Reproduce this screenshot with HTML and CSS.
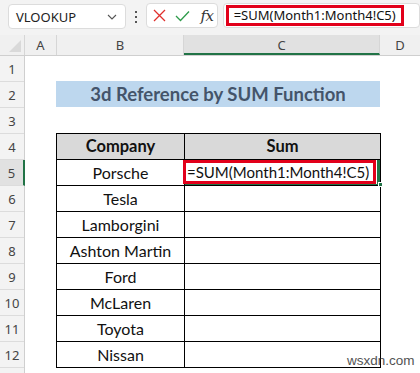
FILE: index.html
```html
<!DOCTYPE html>
<html lang="en">

<head>
    <meta charset="UTF-8">
    <meta name="viewport" content="width=device-width, initial-scale=1.0">
    <title>3d Reference by SUM Function</title>
    <link rel="stylesheet" href="styles.css">
</head>

<body>
    <div class="toolbar">
        <div class="namebox">
            <span>VLOOKUP</span>
            <svg class="chevron" width="10" height="6" viewBox="0 0 10 6">
                <path d="M1 1 L5 5 L9 1" fill="none" stroke="#555" stroke-width="1.1" />
            </svg>
        </div>
        <div class="dots"><i></i><i></i><i></i></div>
        <div class="fxbox">
            <svg width="13" height="13" viewBox="0 0 13 13">
                <path d="M1 1 L12 12 M12 1 L1 12" stroke="#e0302d" stroke-width="1.3" />
            </svg>
            <svg width="15" height="12" viewBox="0 0 15 12">
                <path d="M1 6 L5.5 10.5 L14 1.5" fill="none" stroke="#2e9b4a" stroke-width="1.3" />
            </svg>
            <span class="fx">fx</span>
        </div>
        <div class="formulabar">
            <div class="formula-hl">=SUM(Month1:Month4!C5)</div>
        </div>
    </div>

    <div class="colheads">
        <div class="corner"><span class="tri"></span></div>
        <div class="ch col-a">A</div>
        <div class="ch col-b">B</div>
        <div class="ch col-c active">C</div>
        <div class="ch col-d">D</div>
    </div>

    <div class="sheet">
        <div class="rownums">
            <div class="rn">1</div>
            <div class="rn">2</div>
            <div class="rn">3</div>
            <div class="rn">4</div>
            <div class="rn active">5</div>
            <div class="rn">6</div>
            <div class="rn">7</div>
            <div class="rn">8</div>
            <div class="rn">9</div>
            <div class="rn">10</div>
            <div class="rn">11</div>
            <div class="rn">12</div>
            <div class="rn"></div>
        </div>
        <div class="cells">
            <div class="title">3d Reference by SUM Function</div>
            <div class="table">
                <div class="cell head">Company</div>
                <div class="cell head">Sum</div>
                <div class="cell">Porsche</div>
                <div class="cell selected">
                    <div class="formula-hl cell-hl">=SUM(Month1:Month4!C5)</div>
                    <span class="handle"></span>
                </div>
                <div class="cell">Tesla</div>
                <div class="cell"></div>
                <div class="cell">Lamborgini</div>
                <div class="cell"></div>
                <div class="cell">Ashton Martin</div>
                <div class="cell"></div>
                <div class="cell">Ford</div>
                <div class="cell"></div>
                <div class="cell">McLaren</div>
                <div class="cell"></div>
                <div class="cell">Toyota</div>
                <div class="cell"></div>
                <div class="cell">Nissan</div>
                <div class="cell"></div>
            </div>
        </div>
    </div>

    <div class="watermark">wsxdn.com</div>
</body>

</html>
```

FILE: styles.css
```css
* {
    box-sizing: border-box;
}

body {
    margin: 0;
    width: 420px;
    height: 373px;
    overflow: hidden;
    background: #fff;
    font-family: 'Noto Sans', sans-serif;
    position: relative;
}

/* formula toolbar */
.toolbar {
    height: 35px;
    background: #f3f3f3;
    display: flex;
    align-items: flex-start;
    padding: 3px 0 0 8px;
}

.namebox {
    width: 119px;
    height: 25px;
    margin-top: 1px;
    background: #fff;
    border: 1px solid #dcdcdc;
    border-radius: 4px;
    display: flex;
    align-items: center;
    justify-content: space-between;
    padding: 0 8px 0 7px;
    font-size: 13px;
    color: #222;
}

.dots {
    width: 4px;
    margin: 8px 8px 0 8px;
    display: flex;
    flex-direction: column;
    gap: 3px;
    align-items: center;
}

.dots i {
    width: 2px;
    height: 2px;
    background: #555;
}

.fxbox {
    width: 73px;
    height: 25px;
    background: #fff;
    border: 1px solid #dcdcdc;
    border-radius: 4px;
    display: flex;
    align-items: center;
    padding-left: 6px;
    gap: 9px;
}

.fx {
    font-family: 'DejaVu Serif', serif;
    font-style: italic;
    font-size: 15px;
    color: #333;
    margin-left: 2px;
    letter-spacing: -0.5px;
}

.formulabar {
    width: 200px;
    height: 25px;
    margin-left: 5px;
    background: #fff;
    border: 1px solid #dcdcdc;
    border-radius: 4px;
    padding: 1px 0 0 2px;
}

.formula-hl {
    width: 178px;
    height: 21px;
    border: 3px solid #e2001a;
    font-size: 13px;
    line-height: 15px;
    color: #111;
    padding-left: 5px;
    white-space: nowrap;
    overflow: hidden;
}

/* column headers */
.colheads {
    display: flex;
    height: 21px;
    background: #f0f0f0;
    border-bottom: 1px solid #cfcfcf;
}

.corner {
    width: 25px;
    border-right: 1px solid #d6d6d6;
    position: relative;
}

.tri {
    position: absolute;
    right: 3px;
    bottom: 3px;
    width: 0;
    height: 0;
    border-left: 12px solid transparent;
    border-bottom: 12px solid #d9d9d9;
}

.ch {
    font-size: 13px;
    color: #444;
    text-align: center;
    line-height: 20px;
    border-right: 1px solid #d6d6d6;
}

.col-a { width: 32px; }
.col-b { width: 127px; }
.col-c { width: 196px; }
.col-d { width: 40px; border-right: none; }

.ch.active {
    background: #e1e1e1;
    border-bottom: 2px solid #217346;
}

/* sheet */
.sheet {
    display: flex;
}

.rownums {
    width: 25px;
    background: #f3f3f3;
    border-right: 1px solid #cfcfcf;
}

.rn {
    height: 26px;
    border-bottom: 1px solid #dcdcdc;
    font-size: 13px;
    color: #444;
    text-align: center;
    line-height: 26px;
}

.rn.active {
    background: #e1e1e1;
    border-right: 2px solid #217346;
    margin-right: -1px;
}

.cells {
    padding: 25px 0 0 31px;
}

.title {
    width: 324px;
    height: 26px;
    background: #bdd7ee;
    color: #44546a;
    font-family: 'Lato', sans-serif;
    font-weight: bold;
    font-size: 18.5px;
    text-align: center;
    line-height: 27px;
    margin-bottom: 26px;
}

.table {
    display: grid;
    grid-template-columns: 127px 195px;
    grid-auto-rows: 25px;
    gap: 1px;
    background: #000;
    border: 1px solid #000;
    width: 325px;
    font-family: 'Lato', sans-serif;
    font-size: 16px;
}

.cell {
    background: #fff;
    text-align: center;
    line-height: 25px;
    color: #111;
}

.cell.head {
    background: #d9d9d9;
    font-weight: bold;
    font-size: 16.5px;
}

.cell.selected {
    position: relative;
    display: flex;
    text-align: left;
    box-shadow: inset -3px -1px 0 #217346;
}

.cell-hl {
    width: 193px;
    height: 24px;
    margin-left: -2px;
    font-family: 'Lato', sans-serif;
    font-size: 15px;
    line-height: 18px;
    padding-left: 1px;
}

.handle {
    position: absolute;
    right: -3px;
    bottom: -2px;
    width: 5px;
    height: 5px;
    background: #217346;
    border: 1px solid #fff;
}

.watermark {
    position: absolute;
    left: 347px;
    top: 353px;
    font-family: 'Liberation Sans', sans-serif;
    font-size: 13.5px;
    color: #333;
    opacity: 0.85;
}
```
